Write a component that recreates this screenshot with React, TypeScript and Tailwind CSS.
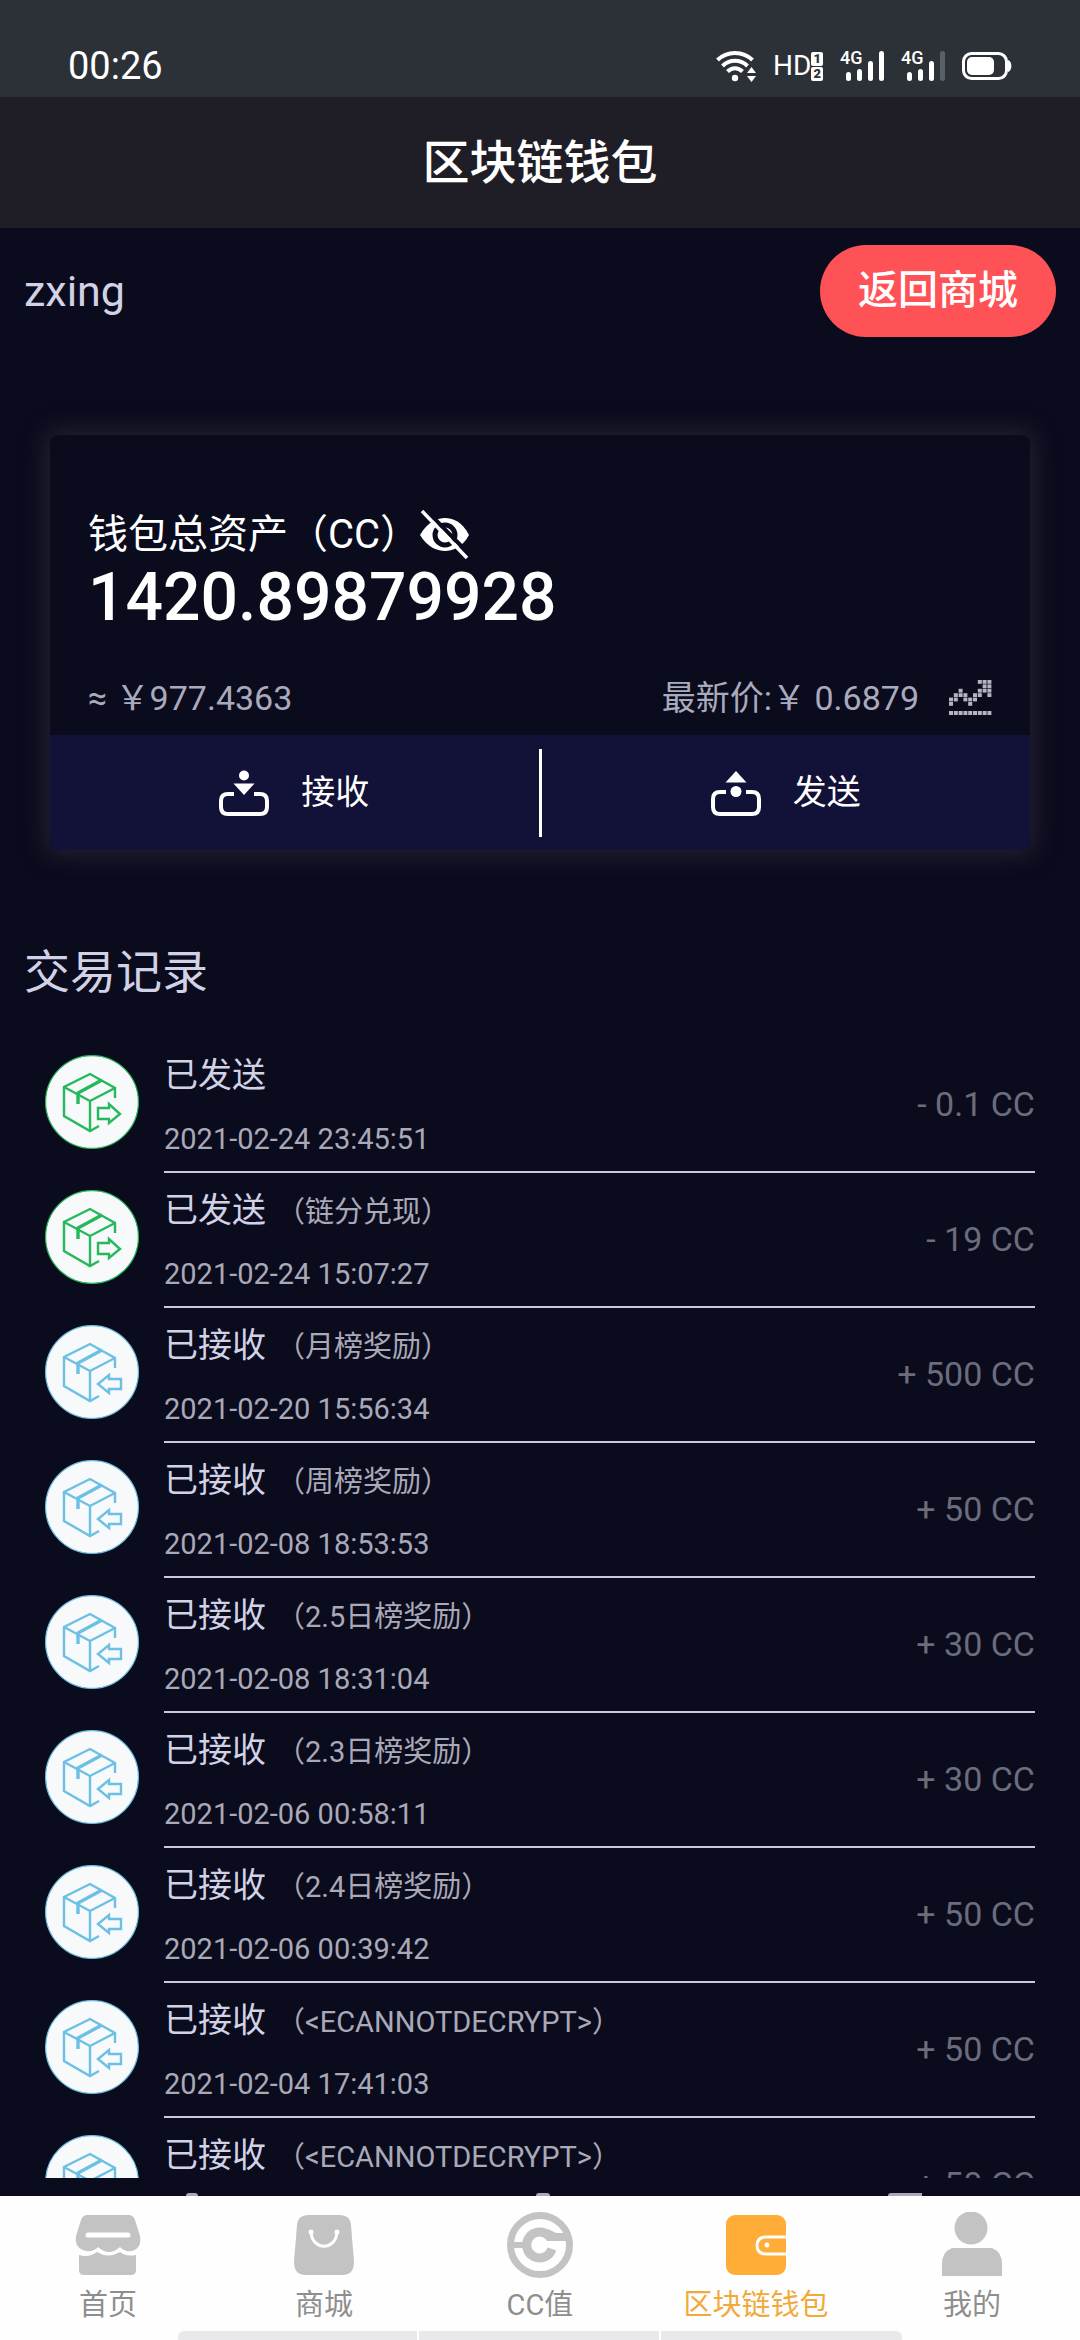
import React, { useState } from 'react';

const records = [
    { type: 'sent', note: '', time: '2021-02-24 23:45:51', amount: '- 0.1 CC' },
    { type: 'sent', note: '（链分兑现）', time: '2021-02-24 15:07:27', amount: '- 19 CC' },
    { type: 'received', note: '（月榜奖励）', time: '2021-02-20 15:56:34', amount: '+ 500 CC' },
    { type: 'received', note: '（周榜奖励）', time: '2021-02-08 18:53:53', amount: '+ 50 CC' },
    { type: 'received', note: '（2.5日榜奖励）', time: '2021-02-08 18:31:04', amount: '+ 30 CC' },
    { type: 'received', note: '（2.3日榜奖励）', time: '2021-02-06 00:58:11', amount: '+ 30 CC' },
    { type: 'received', note: '（2.4日榜奖励）', time: '2021-02-06 00:39:42', amount: '+ 50 CC' },
    { type: 'received', note: '（<ECANNOTDECRYPT>）', time: '2021-02-04 17:41:03', amount: '+ 50 CC' },
    { type: 'received', note: '（<ECANNOTDECRYPT>）', time: '', amount: '+ 50 CC' },
];

const WifiIcon = () => (
    <svg width="40" height="32" viewBox="0 0 40 32" fill="none" stroke="white" strokeWidth="4">
        <path d="M1.5 10C11 0.5 27 0.5 36.5 10" />
        <path d="M6.5 16C13.5 9 24.5 9 31.5 16" />
        <path d="M11.5 21.5C16 17 22 17 26.5 21.5" />
        <circle cx="19" cy="28" r="3.2" fill="white" stroke="none" />
        <path d="M31 23L35.5 17L40 23ZM31 26L35.5 32L40 26Z" fill="white" stroke="none" />
    </svg>
);

const SignalIcon = ({ weak }: { weak?: boolean }) => (
    <div className="relative flex h-[30px] w-[44px] items-end justify-end gap-[6px]">
        <span className="absolute -top-[2px] left-0 text-[18px] leading-[18px] font-medium">4G</span>
        <i className="h-[9px] w-[5px] rounded-sm bg-white" />
        <i className="h-3 w-[5px] rounded-sm bg-white" />
        <i className="h-5 w-[5px] rounded-sm bg-white" />
        <i className={weak ? 'h-[30px] w-[5px] rounded-sm bg-[#5b6066]' : 'h-[30px] w-[5px] rounded-sm bg-white'} />
    </div>
);

const BatteryIcon = () => (
    <svg width="50" height="30" viewBox="0 0 50 30" fill="none">
        <rect x="1.5" y="2.5" width="43" height="25" rx="8" stroke="white" strokeWidth="3" />
        <rect x="5" y="6" width="27" height="18" rx="5" fill="white" />
        <path d="M46 9C50.5 10 50.5 20 46 21Z" fill="white" />
    </svg>
);

const EyeOffIcon = () => (
    <svg width="50" height="50" viewBox="0 0 50 50" fill="none">
        <path d="M0 25C8 11 18 8 25 8C32 8 42 11 49 25C42 38 32 41 25 41C18 41 8 38 0 25Z" fill="white" />
        <circle cx="25" cy="25" r="10" stroke="#0b0b1e" strokeWidth="5" />
        <path d="M5 -1L51 46" stroke="#0b0b1e" strokeWidth="4" />
        <path d="M2 1L47 48" stroke="white" strokeWidth="3.5" />
    </svg>
);

// each cell: [column, row] on a 9 x 6 dot grid
const trendCells = [
    [6, 0], [7, 0], [8, 0], [7, 1], [8, 1], [6, 2], [7, 2], [8, 2], [2, 2], [8, 3], [5, 3], [6, 3],
    [1, 3], [2, 3], [3, 3], [0, 4], [1, 4], [3, 4], [4, 4], [5, 4], [0, 5], [4, 5],
];

const TrendIcon = () => (
    <svg width="43" height="36" viewBox="0 0 43 36" fill="#b4b4c4">
        {trendCells.map(([x, y]) => (
            <rect key={x + '-' + y} x={x * 4.8} y={y * 4.4} width="4" height="3.8" />
        ))}
        {[0, 1, 2, 3, 4, 5, 6, 7, 8].map((x) => (
            <rect key={x} x={x * 4.8} y="31" width="4" height="4" />
        ))}
    </svg>
);

const ReceiveIcon = () => (
    <svg width="50" height="46" viewBox="0 0 50 46" fill="none">
        <path d="M15 24H9Q2 24 2 31V37Q2 44 9 44H41Q48 44 48 37V31Q48 24 41 24H35" stroke="white" strokeWidth="4" />
        <circle cx="25" cy="5.5" r="5" fill="white" />
        <path d="M14.5 13.5H35.5L25 25Z" fill="white" />
    </svg>
);

const SendIcon = () => (
    <svg width="50" height="46" viewBox="0 0 50 46" fill="none">
        <path d="M15 22H9Q2 22 2 29V37Q2 44 9 44H41Q48 44 48 37V29Q48 22 41 22H35" stroke="white" strokeWidth="4" />
        <circle cx="25" cy="21.5" r="5.5" fill="white" />
        <path d="M14.5 12.5H35.5L25 1Z" fill="white" />
    </svg>
);

const BoxIcon = ({ type }: { type: string }) => (
    <svg
        className={type === 'sent' ? 'shrink-0 text-[#26b85c]' : 'shrink-0 text-[#6cc0e4]'}
        width="94"
        height="94"
        viewBox="0 0 94 94"
        fill="none"
        stroke="currentColor"
        strokeWidth="2.4"
    >
        <circle cx="47" cy="47" r="46.4" fill="#f7f9fa" strokeWidth="1.2" />
        <path d="M70 43V33L45 19L19 32V61L45 76L54 71M19 32L45 46L70 33M45 46V76" />
        <path d="M57 25L33 38V49" strokeWidth="3.4" />
        {type === 'sent' ? (
            <path d="M53 53H64V49L75 59L64 68V64H53Z" />
        ) : (
            <path d="M76 54H64V50L53 59L64 68V64H76Z" />
        )}
    </svg>
);

const HomeIcon = () => (
    <svg width="68" height="68" viewBox="0 0 68 68" fill="#c3c3c3">
        <path d="M13 3H55Q59 3 61 8L66 24Q68 36 58 39Q50 40 46 35Q35 45 24 35Q20 40 12 39Q0 36 2 24L7 8Q9 3 13 3Z" />
        <path d="M5 43Q15 46 23 40Q34 47 46 40Q52 45 62 43V58Q62 63 57 63H10Q5 63 5 58Z" />
        <path d="M14 23H54" stroke="white" strokeWidth="5" strokeLinecap="round" />
    </svg>
);

const BagIcon = () => (
    <svg width="68" height="68" viewBox="0 0 68 68" fill="none">
        <path d="M18 3H50Q60 3 61 13L64 50Q64 63 52 63H16Q4 63 4 50L7 13Q8 3 18 3Z" fill="#c3c3c3" />
        <path d="M21 20C22 39 46 39 47 20" stroke="white" strokeWidth="3" />
        <circle cx="21" cy="20" r="2.5" fill="white" />
        <circle cx="47" cy="20" r="2.5" fill="white" />
    </svg>
);

const CoinIcon = () => (
    <svg width="68" height="68" viewBox="0 0 68 68" fill="none" stroke="#c3c3c3">
        <circle cx="34" cy="33" r="29.5" strokeWidth="7" />
        <path d="M43 24A13 13 0 1 0 46 37" strokeWidth="9" />
        <path d="M4 33H20" strokeWidth="6" />
        <path d="M42 17L50 21H63V29H41L38 25Z" fill="#c3c3c3" stroke="none" />
    </svg>
);

const WalletIcon = () => (
    <svg width="68" height="68" viewBox="0 0 68 68" fill="none">
        <rect x="4" y="3" width="60" height="60" rx="9" fill="#ffad37" />
        <path d="M64 25H44Q35 25 35 33.5Q35 42 44 42H64" stroke="white" strokeWidth="3" />
        <circle cx="45" cy="33" r="2.5" fill="white" />
    </svg>
);

const UserIcon = () => (
    <svg width="68" height="68" viewBox="0 0 68 68" fill="#c3c3c3">
        <circle cx="33" cy="16" r="16.5" />
        <path d="M14 36H54Q64 40 64 52V64H4V52Q4 40 14 36Z" />
    </svg>
);

const tabs = [
    { label: '首页', icon: <HomeIcon /> },
    { label: '商城', icon: <BagIcon /> },
    { label: 'CC值', icon: <CoinIcon /> },
    { label: '区块链钱包', icon: <WalletIcon /> },
    { label: '我的', icon: <UserIcon /> },
];

const App = () => {
    const [active, setActive] = useState('区块链钱包');
    const [hidden, setHidden] = useState(false);

    return (
        <div className="flex h-screen flex-col bg-[#0b0b1e] font-['Roboto','Noto_Sans_CJK_SC',sans-serif] text-white">
            <div className="flex h-[97px] shrink-0 items-end justify-between bg-[#2c3137] pr-[68px] pb-[11px] pl-[68px]">
                <span className="text-[38px] leading-[40px]">00:26</span>
                <div className="flex h-[40px] items-center gap-[17px]">
                    <WifiIcon />
                    <div className="flex items-center">
                        <span className="text-[28px] leading-[30px]">HD</span>
                        <span className="flex flex-col gap-px text-[13px] leading-[14px] font-bold text-[#2c3137]">
                            <b className="rounded-xs bg-white px-[2px]">1</b>
                            <b className="rounded-xs bg-white px-[2px]">2</b>
                        </span>
                    </div>
                    <SignalIcon />
                    <SignalIcon weak />
                    <BatteryIcon />
                </div>
            </div>
            <header className="flex h-[131px] shrink-0 items-center justify-center bg-[#1f1e26]">
                <h1 className="text-[47px] leading-[60px] font-medium">区块链钱包</h1>
            </header>

            <main className="flex min-h-0 flex-1 flex-col">
                <div className="flex items-center justify-between px-6 pt-[17px]">
                    <span className="text-[43px] leading-[60px] text-[#d2d2e6]">zxing</span>
                    <button type="button" className="h-[92px] rounded-full bg-[#ff5257] px-[38px] text-[40px] font-medium">
                        返回商城
                    </button>
                </div>

                <section className="mx-[50px] mt-[98px] rounded-lg shadow-[0_0_22px_6px_#20202d]">
                    <div className="px-[38px] pt-[75px] pb-3">
                        <div className="flex h-[50px] items-center">
                            <span className="text-[40px] leading-[50px]">钱包总资产（CC）</span>
                            <button type="button" aria-label="隐藏资产" onClick={() => setHidden(!hidden)}>
                                <EyeOffIcon />
                            </button>
                        </div>
                        <p className="text-[66px] leading-[76px] font-medium">{hidden ? '******' : '1420.89879928'}</p>
                        <div className="mt-[37px] flex h-[50px] items-center text-[34px] leading-[50px] text-[#aaaabd]">
                            <span className="flex-1">≈ ￥977.4363</span>
                            <span className="mr-[30px]">最新价:￥ 0.6879</span>
                            <TrendIcon />
                        </div>
                    </div>
                    <div className="flex h-[115px] items-center rounded-b-lg bg-[#121138] text-[34px]">
                        <button type="button" className="flex flex-1 items-center justify-center gap-8">
                            <ReceiveIcon />
                            接收
                        </button>
                        <i className="h-[88px] w-[3px] bg-white" />
                        <button type="button" className="flex flex-1 items-center justify-center gap-8">
                            <SendIcon />
                            发送
                        </button>
                    </div>
                </section>

                <h2 className="mt-[92px] px-6 text-[46px] leading-[60px] text-[#d2d2e6]">交易记录</h2>
                <ul className="mt-9 min-h-0 flex-1 overflow-hidden px-[45px]">
                    {records.map((item, i) => (
                        <li key={i} className="flex h-[135px]">
                            <div className="w-[119px] shrink-0 pt-[17px]">
                                <BoxIcon type={item.type} />
                            </div>
                            <div className="flex flex-1 items-center justify-between border-b-2 border-[#c9c9dc]">
                                <div className="pt-1">
                                    <p className="text-[34px] leading-[62px] text-[#d2d2e6]">
                                        {item.type === 'sent' ? '已发送' : '已接收'}
                                        <span className="ml-[10px] text-[29px] text-[#a9a9b8]">{item.note}</span>
                                    </p>
                                    <p className="min-h-[62px] text-[29px] leading-[62px] text-[#a9a9b8]">{item.time}</p>
                                </div>
                                <span className="text-[34px] text-[#6c6c7a]">{item.amount}</span>
                            </div>
                        </li>
                    ))}
                </ul>
                <div className="flex h-[18px] shrink-0 items-end justify-between pr-[158px] pl-[186px]">
                    <i className="h-[3px] w-3 rounded-t-full bg-[#a9a9c4]" />
                    <i className="h-[3px] w-[14px] rounded-t-full bg-[#a9a9c4]" />
                    <i className="h-[3px] w-[34px] rounded-tl-full bg-[#a9a9b8]" />
                </div>
            </main>

            <nav className="relative grid h-[144px] shrink-0 grid-cols-5 bg-[#fefefe] pt-4">
                {tabs.map((tab) => (
                    <button
                        key={tab.label}
                        type="button"
                        onClick={() => setActive(tab.label)}
                        className={
                            active === tab.label
                                ? 'flex flex-col items-center text-[29px] leading-[50px] text-[#f2a93b]'
                                : 'flex flex-col items-center text-[29px] leading-[50px] text-[#8e8e8e]'
                        }
                    >
                        {tab.icon}
                        {tab.label}
                    </button>
                ))}
                <div className="absolute inset-x-[178px] bottom-0 grid h-[9px] grid-cols-3 divide-x-2 divide-white rounded-t-md bg-[#e9e9eb]">
                    <i />
                    <i />
                    <i />
                </div>
            </nav>
        </div>
    );
};

export default App;
